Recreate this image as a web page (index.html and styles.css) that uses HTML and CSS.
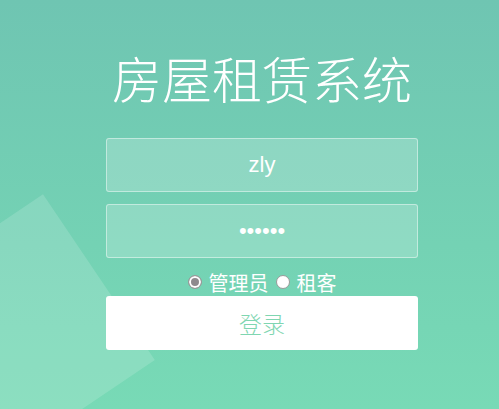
FILE: index.html
```html
<!DOCTYPE html>
<html lang="zh-CN">
<head>
<meta charset="utf-8">
<title>房屋租赁系统</title>
<link rel="stylesheet" href="styles.css">
</head>
<body>
<div class="page">
  <div class="bubble"></div>
  <form class="login">
    <h1 class="title">房屋租赁系统</h1>
    <input class="field" type="text" value="zly">
    <input class="field" type="password" value="123456">
    <div class="roles">
      <label class="role"><input class="radio" type="radio" name="role" checked>管理员</label>
      <label class="role"><input class="radio" type="radio" name="role">租客</label>
    </div>
    <button class="submit" type="button">登录</button>
  </form>
</div>
</body>
</html>
```
FILE: styles.css
```css
html, body {
  margin: 0;
  padding: 0;
  height: 100%;
}
body {
  font-family: "Liberation Sans", "Noto Sans CJK SC", sans-serif;
  overflow: hidden;
}
.page {
  position: relative;
  width: 100%;
  height: 100%;
  overflow: hidden;
  background: linear-gradient(to bottom, #6fc5b2 0%, #74d2b4 60%, #78dab6 100%);
}
.bubble {
  position: absolute;
  left: -84px;
  top: 233px;
  width: 200px;
  height: 200px;
  background: rgba(255, 255, 255, 0.15);
  transform: rotate(56deg);
}
.login {
  position: relative;
  width: 312px;
  margin-left: 106px;
  padding-top: 52px;
  display: flex;
  flex-direction: column;
}
.title {
  margin: 0 0 36px;
  height: 50px;
  line-height: 50px;
  font-family: "Noto Sans CJK SC", sans-serif;
  font-weight: 300;
  font-size: 50px;
  color: #ffffff;
  text-align: center;
  white-space: nowrap;
}
.field {
  box-sizing: border-box;
  width: 312px;
  height: 54px;
  margin: 0 0 12px;
  padding: 0 10px;
  border: 1px solid rgba(255, 255, 255, 0.45);
  border-radius: 3px;
  background: rgba(255, 255, 255, 0.2);
  color: #ffffff;
  font-family: "Liberation Sans", sans-serif;
  font-size: 22px;
  text-align: center;
  outline: none;
}
.field + .field {
  margin-bottom: 0;
}
.roles {
  margin-top: 10px;
  height: 28px;
  display: flex;
  justify-content: center;
  align-items: center;
  font-family: "Noto Sans CJK SC", sans-serif;
  font-size: 20px;
  color: #ffffff;
  gap: 7px;
}
.role {
  display: flex;
  align-items: center;
  gap: 7px;
}
.radio {
  appearance: none;
  -webkit-appearance: none;
  box-sizing: border-box;
  width: 14px;
  height: 14px;
  margin: 0;
  border-radius: 50%;
  background: #ffffff;
  border: 1px solid #9a9a9a;
}
.radio:checked {
  background: #8e8a8e;
  box-shadow: inset 0 0 0 2px #ffffff;
}
.submit {
  box-sizing: border-box;
  width: 312px;
  height: 54px;
  border: none;
  border-radius: 3px;
  background: #ffffff;
  color: #7fd6b1;
  font-family: "Noto Sans CJK SC", sans-serif;
  font-weight: 300;
  font-size: 23px;
  cursor: pointer;
}
```
